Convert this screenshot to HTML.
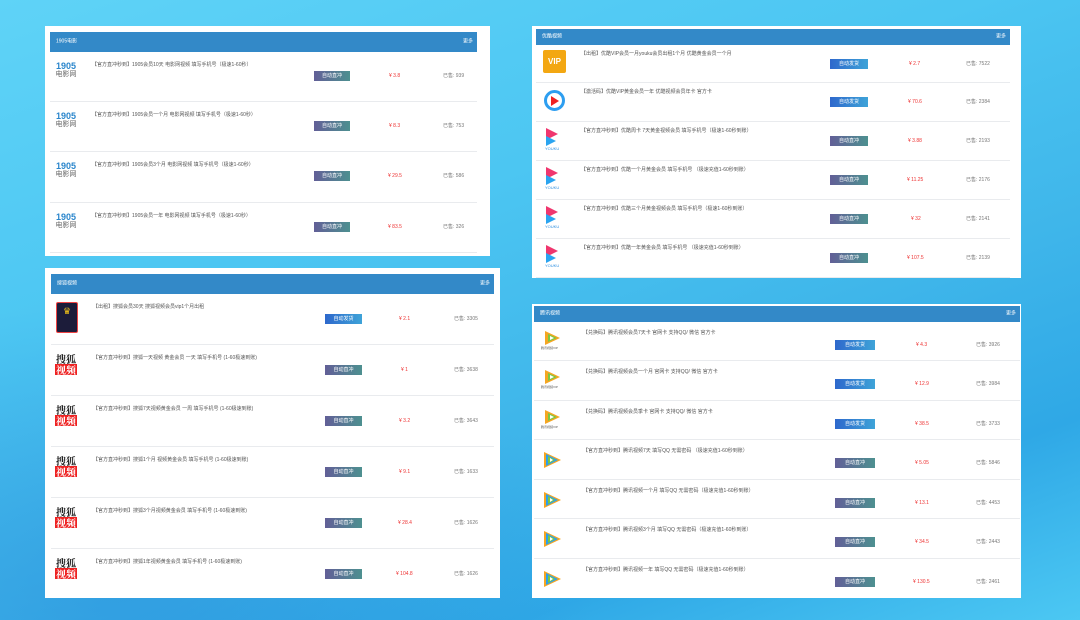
<!DOCTYPE html>
<html><head><meta charset="utf-8"><style>
*{margin:0;padding:0;box-sizing:border-box}
body{width:1080px;height:620px;overflow:hidden;position:relative;font-family:"Liberation Sans","Noto Sans CJK SC",sans-serif;
background:linear-gradient(160deg,#5fd3f7 0%,#4cc6f2 35%,#3fb6ea 60%,#2fa8e6 80%,#4cc8f3 100%)}
.bg1{position:absolute;left:0;top:300px;width:600px;height:320px;background:radial-gradient(ellipse at 20% 90%,rgba(30,120,210,.35),rgba(30,140,220,0) 70%);}
.p{position:absolute;background:#fff}
.h{position:absolute;background:#3389c8;color:#fff;font-size:5px;line-height:1}
.h .t{position:absolute;left:6px;top:50%;transform:translateY(-50%)}
.h .m{position:absolute;right:4px;top:50%;transform:translateY(-50%)}
.r{position:absolute;left:0;right:0;border-bottom:1px solid #e9ebee;font-size:5px;color:#555;line-height:1}
.r>*{position:absolute}
.tx{white-space:nowrap}
.b{color:#fff;height:10px;line-height:10px;text-align:center;font-size:5px}
.a{background:linear-gradient(90deg,#2e68cc,#3ea3d8)}
.z{background:linear-gradient(90deg,#625f97,#4d9090)}
.pr{color:#e33}
.s{color:#777}
.i1905{width:22px;text-align:center;font-weight:bold;color:#2a86cc;font-size:9px;line-height:9px}
.i1905 span{display:block;color:#666;font-weight:normal;font-size:7px;line-height:8px}
.sohu{width:22px;text-align:center;font-family:"Noto Serif CJK SC",serif;font-weight:bold;font-size:10px;line-height:11px;color:#222}
.sohu span{display:block;background:#e22;color:#fff}
</style></head><body>
<div class="bg1"></div>

<!-- Panel 1 -->
<div class="p" style="left:45px;top:26px;width:445px;height:230px">
<div class="h" style="left:5px;top:6px;width:427px;height:20px"><span class="t">1905电影</span><span class="m">更多</span></div>
<div style="position:absolute;left:5px;top:26px;width:427px">
<div class="r" style="top:0;height:50px"><div class="i1905" style="left:5px;top:10px">1905<span>电影网</span></div><div class="tx" style="left:42px;top:11px">【官方直冲秒到】1905会员10天 电影网视频 填写手机号（极速1-60秒）</div><div class="b z" style="left:264px;top:19px;width:36px">自动直冲</div><div class="pr" style="left:339px;top:22px">¥ 3.8</div><div class="s" style="left:393px;top:22px">已售: 939</div></div>
<div class="r" style="top:50px;height:50px"><div class="i1905" style="left:5px;top:10px">1905<span>电影网</span></div><div class="tx" style="left:42px;top:11px">【官方直冲秒到】1905会员一个月 电影网视频 填写手机号（极速1-60秒）</div><div class="b z" style="left:264px;top:19px;width:36px">自动直冲</div><div class="pr" style="left:339px;top:22px">¥ 8.3</div><div class="s" style="left:393px;top:22px">已售: 753</div></div>
<div class="r" style="top:100px;height:51px"><div class="i1905" style="left:5px;top:10px">1905<span>电影网</span></div><div class="tx" style="left:42px;top:11px">【官方直冲秒到】1905会员3个月 电影网视频 填写手机号（极速1-60秒）</div><div class="b z" style="left:264px;top:19px;width:36px">自动直冲</div><div class="pr" style="left:338px;top:22px">¥ 29.5</div><div class="s" style="left:393px;top:22px">已售: 586</div></div>
<div class="r" style="top:151px;height:50px"><div class="i1905" style="left:5px;top:10px">1905<span>电影网</span></div><div class="tx" style="left:42px;top:11px">【官方直冲秒到】1905会员一年 电影网视频 填写手机号（极速1-60秒）</div><div class="b z" style="left:264px;top:19px;width:36px">自动直冲</div><div class="pr" style="left:338px;top:22px">¥ 83.5</div><div class="s" style="left:393px;top:22px">已售: 326</div></div>
</div></div>

<!-- Panel 2 -->
<div class="p" style="left:532px;top:26px;width:489px;height:252px">
<div class="h" style="left:4px;top:3px;width:474px;height:16px"><span class="t">优酷视频</span><span class="m">更多</span></div>
<div style="position:absolute;left:4px;top:19px;width:474px">
<div class="r" style="top:0;height:38px"><div style="left:7px;top:5px;width:23px;height:23px;background:#f3a712;border-radius:2px;color:#fff;font-weight:bold;font-size:8px;text-align:center;line-height:23px">VIP</div><div class="tx" style="left:45px;top:7px">【出租】优酷VIP会员一月youku会员出租1个月 优酷黄金会员一个月</div><div class="b a" style="left:294px;top:14px;width:38px">自动发货</div><div class="pr" style="left:373px;top:17px">¥ 2.7</div><div class="s" style="left:430px;top:17px">已售: 7522</div></div>
<div class="r" style="top:38px;height:39px"><div style="left:8px;top:7px;width:21px;height:21px;border:3px solid #2d9ef0;border-radius:50%"></div><div style="left:15px;top:13px;width:0;height:0;border-left:8px solid #e22;border-top:5px solid transparent;border-bottom:5px solid transparent"></div><div class="tx" style="left:45px;top:7px">【激活码】优酷VIP黄金会员一年 优酷视频会员年卡 官方卡</div><div class="b a" style="left:294px;top:14px;width:38px">自动发货</div><div class="pr" style="left:372px;top:17px">¥ 70.6</div><div class="s" style="left:430px;top:17px">已售: 2384</div></div>
<div class="r" style="top:77px;height:39px"><div style="left:10px;top:6px;width:0;height:0;border-left:12px solid #f0366e;border-top:6px solid transparent;border-bottom:6px solid transparent"></div><div style="left:10px;top:14px;width:0;height:0;border-left:10px solid #2aa4f0;border-top:5px solid transparent;border-bottom:5px solid transparent"></div><div style="left:9px;top:25px;font-size:4px;color:#2a8de0">YOUKU</div><div class="tx" style="left:45px;top:7px">【官方直冲秒到】优酷周卡 7天黄金视频会员 填写手机号（极速1-60秒到账）</div><div class="b z" style="left:294px;top:14px;width:38px">自动直冲</div><div class="pr" style="left:372px;top:17px">¥ 3.88</div><div class="s" style="left:430px;top:17px">已售: 2193</div></div>
<div class="r" style="top:116px;height:39px"><div style="left:10px;top:6px;width:0;height:0;border-left:12px solid #f0366e;border-top:6px solid transparent;border-bottom:6px solid transparent"></div><div style="left:10px;top:14px;width:0;height:0;border-left:10px solid #2aa4f0;border-top:5px solid transparent;border-bottom:5px solid transparent"></div><div style="left:9px;top:25px;font-size:4px;color:#2a8de0">YOUKU</div><div class="tx" style="left:45px;top:7px">【官方直冲秒到】优酷一个月黄金会员 填写手机号 （极速充值1-60秒到账）</div><div class="b z" style="left:294px;top:14px;width:38px">自动直冲</div><div class="pr" style="left:371px;top:17px">¥ 11.25</div><div class="s" style="left:430px;top:17px">已售: 2176</div></div>
<div class="r" style="top:155px;height:39px"><div style="left:10px;top:6px;width:0;height:0;border-left:12px solid #f0366e;border-top:6px solid transparent;border-bottom:6px solid transparent"></div><div style="left:10px;top:14px;width:0;height:0;border-left:10px solid #2aa4f0;border-top:5px solid transparent;border-bottom:5px solid transparent"></div><div style="left:9px;top:25px;font-size:4px;color:#2a8de0">YOUKU</div><div class="tx" style="left:45px;top:7px">【官方直冲秒到】优酷三个月黄金视频会员 填写手机号（极速1-60秒到账）</div><div class="b z" style="left:294px;top:14px;width:38px">自动直冲</div><div class="pr" style="left:375px;top:17px">¥ 32</div><div class="s" style="left:430px;top:17px">已售: 2141</div></div>
<div class="r" style="top:194px;height:39px"><div style="left:10px;top:6px;width:0;height:0;border-left:12px solid #f0366e;border-top:6px solid transparent;border-bottom:6px solid transparent"></div><div style="left:10px;top:14px;width:0;height:0;border-left:10px solid #2aa4f0;border-top:5px solid transparent;border-bottom:5px solid transparent"></div><div style="left:9px;top:25px;font-size:4px;color:#2a8de0">YOUKU</div><div class="tx" style="left:45px;top:7px">【官方直冲秒到】优酷一年黄金会员 填写手机号 （极速充值1-60秒到账）</div><div class="b z" style="left:294px;top:14px;width:38px">自动直冲</div><div class="pr" style="left:371px;top:17px">¥ 107.5</div><div class="s" style="left:430px;top:17px">已售: 2139</div></div>
</div></div>

<!-- Panel 3 -->
<div class="p" style="left:45px;top:268px;width:455px;height:330px">
<div class="h" style="left:6px;top:6px;width:443px;height:20px"><span class="t">搜狐视频</span><span class="m">更多</span></div>
<div style="position:absolute;left:6px;top:26px;width:443px">
<div class="r" style="top:0;height:51px"><div style="left:5px;top:8px;width:22px;height:31px;background:#1c1c3a;border:1px solid #e44;border-radius:2px"></div><div style="left:12px;top:13px;color:#f5c518;font-size:9px">♛</div><div class="tx" style="left:42px;top:11px">【出租】搜狐会员30天 搜狐视频会员vip1个月出租</div><div class="b a" style="left:274px;top:20px;width:37px">自动发货</div><div class="pr" style="left:348px;top:23px">¥ 2.1</div><div class="s" style="left:403px;top:23px">已售: 3305</div></div>
<div class="r" style="top:51px;height:51px"><div class="sohu" style="left:4px;top:8px">搜狐<span>视频</span></div><div class="tx" style="left:42px;top:11px">【官方直冲秒到】搜狐一天视频 黄金会员 一天 填写手机号 (1-60极速到账)</div><div class="b z" style="left:274px;top:20px;width:37px">自动直冲</div><div class="pr" style="left:350px;top:23px">¥ 1</div><div class="s" style="left:403px;top:23px">已售: 3638</div></div>
<div class="r" style="top:102px;height:51px"><div class="sohu" style="left:4px;top:8px">搜狐<span>视频</span></div><div class="tx" style="left:42px;top:11px">【官方直冲秒到】搜狐7天视频黄金会员 一周 填写手机号 (1-60极速到账)</div><div class="b z" style="left:274px;top:20px;width:37px">自动直冲</div><div class="pr" style="left:348px;top:23px">¥ 3.2</div><div class="s" style="left:403px;top:23px">已售: 3643</div></div>
<div class="r" style="top:153px;height:51px"><div class="sohu" style="left:4px;top:8px">搜狐<span>视频</span></div><div class="tx" style="left:42px;top:11px">【官方直冲秒到】搜狐1个月 视频黄金会员 填写手机号 (1-60极速到账)</div><div class="b z" style="left:274px;top:20px;width:37px">自动直冲</div><div class="pr" style="left:348px;top:23px">¥ 9.1</div><div class="s" style="left:403px;top:23px">已售: 1633</div></div>
<div class="r" style="top:204px;height:51px"><div class="sohu" style="left:4px;top:8px">搜狐<span>视频</span></div><div class="tx" style="left:42px;top:11px">【官方直冲秒到】搜狐3个月视频黄金会员 填写手机号 (1-60极速到账)</div><div class="b z" style="left:274px;top:20px;width:37px">自动直冲</div><div class="pr" style="left:347px;top:23px">¥ 28.4</div><div class="s" style="left:403px;top:23px">已售: 1626</div></div>
<div class="r" style="top:255px;height:51px;border:none"><div class="sohu" style="left:4px;top:8px">搜狐<span>视频</span></div><div class="tx" style="left:42px;top:11px">【官方直冲秒到】搜狐1年视频黄金会员 填写手机号 (1-60极速到账)</div><div class="b z" style="left:274px;top:20px;width:37px">自动直冲</div><div class="pr" style="left:345px;top:23px">¥ 104.8</div><div class="s" style="left:403px;top:23px">已售: 1626</div></div>
</div></div>

<!-- Panel 4 -->
<div class="p" style="left:532px;top:304px;width:489px;height:294px">
<div class="h" style="left:2px;top:2px;width:486px;height:16px"><span class="t">腾讯视频</span><span class="m">更多</span></div>
<div style="position:absolute;left:2px;top:18px;width:486px">
<div class="r" style="top:0;height:39px"><svg style="left:9px;top:8px" width="18" height="16" viewBox="0 0 18 16"><path d="M2 1 L17 8 L2 15 Z" fill="#f5a623"/><path d="M5 4 L14 8 L5 12 Z" fill="#7ac943"/><path d="M7 6 L11 8 L7 10Z" fill="#fff"/></svg><div style="left:7px;top:25px;font-size:3px;color:#555">腾讯视频VIP</div><div class="tx" style="left:49px;top:9px">【兑换码】腾讯视频会员7天卡 官网卡 支持QQ/ 微信 官方卡</div><div class="b a" style="left:301px;top:18px;width:40px">自动发货</div><div class="pr" style="left:382px;top:21px">¥ 4.3</div><div class="s" style="left:442px;top:21px">已售: 3926</div></div>
<div class="r" style="top:39px;height:40px"><svg style="left:9px;top:8px" width="18" height="16" viewBox="0 0 18 16"><path d="M2 1 L17 8 L2 15 Z" fill="#f5a623"/><path d="M5 4 L14 8 L5 12 Z" fill="#7ac943"/><path d="M7 6 L11 8 L7 10Z" fill="#fff"/></svg><div style="left:7px;top:25px;font-size:3px;color:#555">腾讯视频VIP</div><div class="tx" style="left:49px;top:9px">【兑换码】腾讯视频会员一个月 官网卡 支持QQ/ 微信 官方卡</div><div class="b a" style="left:301px;top:18px;width:40px">自动发货</div><div class="pr" style="left:381px;top:21px">¥ 12.9</div><div class="s" style="left:442px;top:21px">已售: 3984</div></div>
<div class="r" style="top:79px;height:39px"><svg style="left:9px;top:8px" width="18" height="16" viewBox="0 0 18 16"><path d="M2 1 L17 8 L2 15 Z" fill="#f5a623"/><path d="M5 4 L14 8 L5 12 Z" fill="#7ac943"/><path d="M7 6 L11 8 L7 10Z" fill="#fff"/></svg><div style="left:7px;top:25px;font-size:3px;color:#555">腾讯视频VIP</div><div class="tx" style="left:49px;top:9px">【兑换码】腾讯视频会员季卡 官网卡 支持QQ/ 微信 官方卡</div><div class="b a" style="left:301px;top:18px;width:40px">自动发货</div><div class="pr" style="left:381px;top:21px">¥ 38.5</div><div class="s" style="left:442px;top:21px">已售: 3733</div></div>
<div class="r" style="top:118px;height:40px"><svg style="left:8px;top:11px" width="20" height="18" viewBox="0 0 20 18"><path d="M2 1 L19 9 L2 17 Z" fill="#f5a623"/><path d="M4 3 L16 9 L4 15 Z" fill="#2aa0f0"/><path d="M6 5 L13 9 L6 13 Z" fill="#7ac943"/><path d="M8 7 L11 9 L8 11Z" fill="#fff"/></svg><div class="tx" style="left:49px;top:9px">【官方直冲秒到】腾讯视频7天 填写QQ 无需密码 （极速充值1-60秒到账）</div><div class="b z" style="left:301px;top:18px;width:40px">自动直冲</div><div class="pr" style="left:381px;top:21px">¥ 5.05</div><div class="s" style="left:442px;top:21px">已售: 5846</div></div>
<div class="r" style="top:158px;height:39px"><svg style="left:8px;top:11px" width="20" height="18" viewBox="0 0 20 18"><path d="M2 1 L19 9 L2 17 Z" fill="#f5a623"/><path d="M4 3 L16 9 L4 15 Z" fill="#2aa0f0"/><path d="M6 5 L13 9 L6 13 Z" fill="#7ac943"/><path d="M8 7 L11 9 L8 11Z" fill="#fff"/></svg><div class="tx" style="left:49px;top:9px">【官方直冲秒到】腾讯视频一个月 填写QQ 无需密码（极速充值1-60秒到账）</div><div class="b z" style="left:301px;top:18px;width:40px">自动直冲</div><div class="pr" style="left:381px;top:21px">¥ 13.1</div><div class="s" style="left:442px;top:21px">已售: 4453</div></div>
<div class="r" style="top:197px;height:40px"><svg style="left:8px;top:11px" width="20" height="18" viewBox="0 0 20 18"><path d="M2 1 L19 9 L2 17 Z" fill="#f5a623"/><path d="M4 3 L16 9 L4 15 Z" fill="#2aa0f0"/><path d="M6 5 L13 9 L6 13 Z" fill="#7ac943"/><path d="M8 7 L11 9 L8 11Z" fill="#fff"/></svg><div class="tx" style="left:49px;top:9px">【官方直冲秒到】腾讯视频3个月 填写QQ 无需密码（极速充值1-60秒到账）</div><div class="b z" style="left:301px;top:18px;width:40px">自动直冲</div><div class="pr" style="left:381px;top:21px">¥ 34.5</div><div class="s" style="left:442px;top:21px">已售: 2443</div></div>
<div class="r" style="top:237px;height:39px;border:none"><svg style="left:8px;top:11px" width="20" height="18" viewBox="0 0 20 18"><path d="M2 1 L19 9 L2 17 Z" fill="#f5a623"/><path d="M4 3 L16 9 L4 15 Z" fill="#2aa0f0"/><path d="M6 5 L13 9 L6 13 Z" fill="#7ac943"/><path d="M8 7 L11 9 L8 11Z" fill="#fff"/></svg><div class="tx" style="left:49px;top:9px">【官方直冲秒到】腾讯视频一年 填写QQ 无需密码（极速充值1-60秒到账）</div><div class="b z" style="left:301px;top:18px;width:40px">自动直冲</div><div class="pr" style="left:379px;top:21px">¥ 130.5</div><div class="s" style="left:442px;top:21px">已售: 2461</div></div>
</div></div>
</body></html>
